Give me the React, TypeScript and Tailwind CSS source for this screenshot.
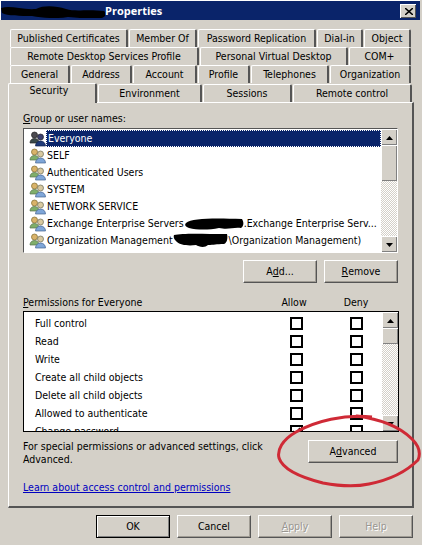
import type { ReactNode } from "react";

const font = "font-['DejaVu_Sans_Condensed','DejaVu_Sans',sans-serif]";

function Tab({ w, label, active }: { w: number; label: string; active?: boolean }) {
  return (
    <div
      style={{ width: w }}
      className={
        active
          ? "relative z-10 -mb-px flex h-[20px] shrink-0 items-start justify-center rounded-t-[2px] border-t border-l border-r-2 border-t-white border-l-white border-r-[#555] bg-[#d4d0c8] pt-[1px] pr-[6px]"
          : "flex h-[18px] shrink-0 items-center justify-center rounded-t-[2px] border-t border-l border-r-2 border-t-white border-l-white border-r-[#555] bg-[#d4d0c8]"
      }
    >
      {label}
    </div>
  );
}

function Btn({ w, children, primary, disabled }: { w: number; children: ReactNode; primary?: boolean; disabled?: boolean }) {
  return (
    <div
      style={{ width: w }}
      className={
        "flex h-[23px] shrink-0 items-center justify-center border bg-[#d4d0c8] " +
        (primary
          ? "border-black shadow-[inset_1px_1px_0_#fff,inset_-1px_-1px_0_#808080]"
          : "border-t-white border-l-white border-r-[#555] border-b-[#555] shadow-[inset_-1px_-1px_0_#a09c94]") +
        (disabled ? " text-[#9a9792] [text-shadow:1px_1px_0_#fff]" : "")
      }
    >
      {children}
    </div>
  );
}

function GroupIcon({ dim }: { dim?: boolean }) {
  return (
    <svg width="17" height="16" viewBox="0 0 17 16" className="shrink-0">
      <circle cx="5.5" cy="4" r="3" fill={dim ? "#4b4a50" : "#d9b36a"} stroke={dim ? "#222" : "#7d6a2e"} strokeWidth="0.7" />
      <path d="M1 12c0-3 2-4.500 4.500-4.500S10 9 10 12z" fill={dim ? "#3a4a4a" : "#7fae6a"} stroke={dim ? "#222" : "#55704a"} strokeWidth="0.7" />
      <circle cx="11.500" cy="6" r="3" fill={dim ? "#3a3f70" : "#d8c9a0"} stroke={dim ? "#222" : "#6a6a55"} strokeWidth="0.7" />
      <path d="M6.500 15c0-3 2.200-5 5-5s5 2 5 5z" fill={dim ? "#1e3a78" : "#7fa6d8"} stroke={dim ? "#13244f" : "#46648f"} strokeWidth="0.7" />
    </svg>
  );
}

function Scribble({ w, h, d }: { w: number; h: number; d: string }) {
  return (
    <svg width={w} height={h} viewBox={`0 0 ${w} ${h}`} className="shrink-0">
      <path d={d} fill="#000" />
    </svg>
  );
}

function Arrow({ up }: { up?: boolean }) {
  return (
    <div className="flex h-[16px] w-[16px] shrink-0 items-center justify-center border-t border-l border-t-white border-l-white bg-[#d4d0c8] shadow-[inset_-1px_-1px_0_#808080]">
      <svg width="7" height="4" viewBox="0 0 7 4">
        <path d={up ? "M3.500 0L7 4H0z" : "M0 0h7L3.500 4z"} fill="#000" />
      </svg>
    </div>
  );
}

function Scrollbar({ thumb }: { thumb: number }) {
  return (
    <div className="flex h-full w-[16px] shrink-0 flex-col bg-[repeating-conic-gradient(#d4d0c8_0_25%,#fff_0_50%)] bg-[length:2px_2px]">
      <Arrow up />
      <div
        style={{ height: thumb }}
        className="shrink-0 border-t border-l border-t-white border-l-white bg-[#d4d0c8] shadow-[inset_-1px_-1px_0_#808080]"
      />
      <div className="flex-1" />
      <Arrow />
    </div>
  );
}

const users: { name: ReactNode; selected?: boolean }[] = [
  { name: "Everyone", selected: true },
  { name: "SELF" },
  { name: "Authenticated Users" },
  { name: "SYSTEM" },
  { name: "NETWORK SERVICE" },
  {
    name: (
      <>
        Exchange Enterprise Servers
        <Scribble w={60} h={14} d="M2 6C8 1 30 1 58 2c2 3 2 7-1 9-8-1-12 2-22 0-10 2-22 2-30 0C2 10 0 8 2 6z" />
        .Exchange Enterprise Serv...
      </>
    ),
  },
  {
    name: (
      <>
        Organization Management
        <Scribble w={56} h={15} d="M1 2C10 0 30 1 54 1c1 4 0 9-3 10-8 0-10 1-16 1-3 3-9 2-12 0-8 1-16 0-19-3C2 7 0 5 1 2z" />
        \Organization Management)
      </>
    ),
  },
];

const perms = ["Full control", "Read", "Write", "Create all child objects", "Delete all child objects", "Allowed to authenticate"];

function Box({ checked }: { checked?: boolean }) {
  return (
    <div className="relative h-[13px] w-[13px] shrink-0 border-2 border-black bg-white">
      {checked && (
        <svg width="9" height="9" viewBox="0 0 9 9" className="absolute">
          <path d="M1 4l2 3 5-6" fill="none" stroke="#000" strokeWidth="1.500" />
        </svg>
      )}
    </div>
  );
}

function PermRow({ label, checked }: { label: string; checked?: boolean }) {
  return (
    <div className="flex h-[18px] shrink-0 items-center pl-[11px]">
      <span className="w-[255px]">{label}</span>
      <Box checked={checked} />
      <div className="w-[47px]" />
      <Box />
    </div>
  );
}

export default function App() {
  return (
    <div className={`${font} relative flex h-[545px] w-[422px] flex-col overflow-hidden bg-[#d4d0c8] text-[10.500px] leading-none text-black`}>
      {/* title bar */}
      <div className="mr-[2px] flex h-[20px] shrink-0 items-center border-t border-l border-white bg-[#0a246a] pr-[4px]">
        <Scribble w={104} h={14} d="M0 4C10 1 20 6 35 5c8-4 20-3 30 0 10 3 20 0 38 2 3 3 2 5-2 7-15 1-22 0-34-1-12 2-25 1-36-1C20 12 6 12 1 9z" />
        <span className="flex-1 font-['Open_Sans',sans-serif] text-[11px] font-bold text-white">Properties</span>
        <div className="flex h-[14px] w-[16px] items-center justify-center border-t border-l border-t-white border-l-white bg-[#d4d0c8] shadow-[inset_-1px_-1px_0_#555]">
          <svg width="8" height="7" viewBox="0 0 8 7">
            <path d="M0 0l8 7M8 0L0 7" stroke="#000" strokeWidth="1.500" />
          </svg>
        </div>
      </div>

      {/* tabs */}
      <div className="mt-[9px] ml-[10px] flex flex-col">
        <div className="flex gap-px">
          <Tab w={118} label="Published Certificates" />
          <Tab w={68} label="Member Of" />
          <Tab w={118} label="Password Replication" />
          <Tab w={46} label="Dial-in" />
          <Tab w={47} label="Object" />
        </div>
        <div className="flex gap-px">
          <Tab w={189} label="Remote Desktop Services Profile" />
          <Tab w={148} label="Personal Virtual Desktop" />
          <Tab w={62} label="COM+" />
        </div>
        <div className="flex gap-px">
          <Tab w={60} label="General" />
          <Tab w={61} label="Address" />
          <Tab w={64} label="Account" />
          <Tab w={52} label="Profile" />
          <Tab w={78} label="Telephones" />
          <Tab w={81} label="Organization" />
        </div>
        <div className="-ml-[2px] flex items-end gap-px">
          <Tab w={89} label="Security" active />
          <Tab w={104} label="Environment" />
          <Tab w={89} label="Sessions" />
          <Tab w={119} label="Remote control" />
        </div>
      </div>

      {/* panel */}
      <div className="ml-[8px] flex h-[406px] w-[406px] shrink-0 flex-col border-t border-l border-t-white border-l-white border-r-2 border-b-2 border-r-[#555] border-b-[#555] px-[14px] pt-[10px]">
        <div className="h-[15px] shrink-0"><u>G</u>roup or user names:</div>
        <div className="flex h-[125px] w-[375px] shrink-0 border border-t-[#555] border-l-[#555] border-r-white border-b-white bg-white">
          <div className="flex min-w-0 flex-1 flex-col overflow-hidden pt-[1px] pl-[5px]">
            {users.map((u, i) => (
              <div key={i} className="flex h-[17px] shrink-0 items-center whitespace-nowrap">
                <GroupIcon dim={u.selected} />
                <span className={"flex h-[17px] flex-1 items-center pl-[1px] " + (u.selected ? "border border-dotted border-white bg-[#0a246a] text-white" : "")}>
                  {u.name}
                </span>
              </div>
            ))}
          </div>
          <Scrollbar thumb={36} />
        </div>
        <div className="mt-[7px] flex w-[375px] shrink-0 justify-end gap-[7px]">
          <Btn w={74}>A<u>d</u>d...</Btn>
          <Btn w={74}><u>R</u>emove</Btn>
        </div>

        <div className="mt-[12px] flex h-[14px] w-[375px] shrink-0 items-center">
          <span className="w-[241px]"><u>P</u>ermissions for Everyone</span>
          <span className="w-[60px] text-center">Allow</span>
          <span className="w-[64px] text-center">Deny</span>
        </div>
        <div className="mt-[2px] flex h-[121px] w-[376px] shrink-0 border border-black bg-white">
          <div className="flex min-w-0 flex-1 flex-col overflow-hidden pt-[2px]">
            {perms.map((p) => (
              <PermRow key={p} label={p} />
            ))}
            <PermRow label="Change password" checked />
          </div>
          <Scrollbar thumb={16} />
        </div>
        <div className="mt-[8px] flex w-[375px] shrink-0 items-start justify-between">
          <p className="w-[245px] leading-[13px]">For special permissions or advanced settings, click Advanced.</p>
          <Btn w={90}>A<u>d</u>vanced</Btn>
        </div>
        <a className="mt-[16px] text-[#0000c0] underline">Learn about access control and permissions</a>
      </div>

      {/* dialog buttons */}
      <div className="mt-[7px] flex justify-end gap-[7px] pr-[9px]">
        <Btn w={74} primary>OK</Btn>
        <Btn w={74}>Cancel</Btn>
        <Btn w={74} disabled><u>A</u>pply</Btn>
        <Btn w={74} disabled>Help</Btn>
      </div>

      {/* hand-drawn circle around Advanced */}
      <svg width="150" height="80" viewBox="0 0 150 80" className="absolute top-[412px] left-[272px]">
        <path
          d="M100 5C72 2 44 9 24 20 10 28 5 38 7 46c4 12 24 20 44 25 16 3 32 4 46 1 20-4 38-13 49-24 3-7 1-14-6-21C128 15 108 7 84 4"
          fill="none"
          stroke="#cf2a36"
          strokeWidth="3"
        />
      </svg>
    </div>
  );
}
